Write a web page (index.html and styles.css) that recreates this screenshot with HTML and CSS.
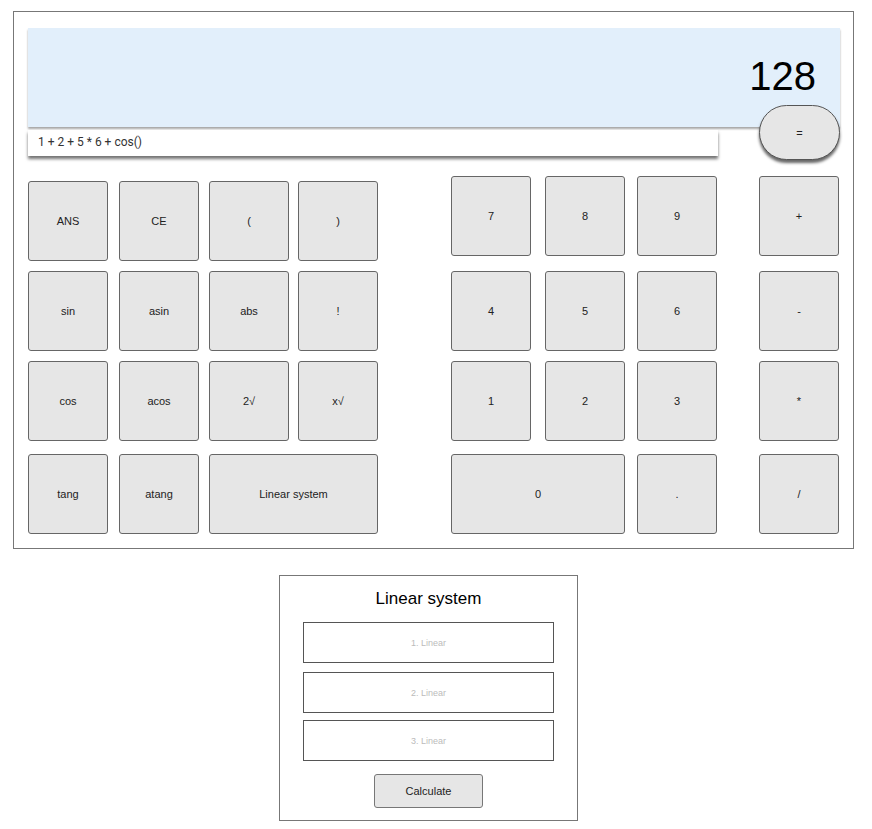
FILE: index.html
```html
<!DOCTYPE html>
<html>
<head>
<meta charset="utf-8">
<link rel="stylesheet" href="styles.css">
</head>
<body>
<div class="calc">
  <div class="screen">
    <div class="display">128</div>
    <div class="expr">1 + 2 + 5 * 6 + cos()</div>
    <button class="equals">=</button>
  </div>
  <div class="keys">
    <div class="left">
      <button class="key">ANS</button>
      <button class="key">CE</button>
      <button class="key">(</button>
      <button class="key">)</button>
      <button class="key">sin</button>
      <button class="key">asin</button>
      <button class="key">abs</button>
      <button class="key">!</button>
      <button class="key">cos</button>
      <button class="key">acos</button>
      <button class="key">2√</button>
      <button class="key">x√</button>
      <button class="key">tang</button>
      <button class="key">atang</button>
      <button class="key wide">Linear system</button>
    </div>
    <div class="right">
      <button class="key">7</button>
      <button class="key">8</button>
      <button class="key">9</button>
      <button class="key">+</button>
      <button class="key">4</button>
      <button class="key">5</button>
      <button class="key">6</button>
      <button class="key">-</button>
      <button class="key">1</button>
      <button class="key">2</button>
      <button class="key">3</button>
      <button class="key">*</button>
      <button class="key zero">0</button>
      <button class="key">.</button>
      <button class="key">/</button>
    </div>
  </div>
</div>
<div class="panel">
  <h2 class="panel-title">Linear system</h2>
  <input class="lin" placeholder="1. Linear">
  <input class="lin second" placeholder="2. Linear">
  <input class="lin third" placeholder="3. Linear">
  <button class="calc-btn">Calculate</button>
</div>
</body>
</html>
```

FILE: styles.css
```css
* { box-sizing: border-box; }
body {
  margin: 0;
  font-family: "Liberation Sans", Arial, sans-serif;
  background: #fff;
}
.calc {
  margin: 11px 0 0 13px;
  width: 841px;
  height: 538px;
  border: 1px solid #777;
  padding: 16px 13px 0 14px;
}
.screen {
  position: relative;
}
.display {
  height: 99px;
  width: 812px;
  background: #e2effb;
  box-shadow: 0 2px 2px rgba(0,0,0,0.35);
  font-size: 40px;
  text-align: right;
  padding: 26px 24px 0 0;
  color: #000;
}
.expr {
  margin-top: 3px;
  width: 690px;
  height: 26px;
  background: #fff;
  box-shadow: 0 3px 3px rgba(0,0,0,0.55);
  font-family: Roboto, "Liberation Sans", sans-serif;
  font-size: 12px;
  color: #333;
  padding: 5px 0 0 10px;
}
.equals {
  position: absolute;
  left: 731px;
  top: 77px;
  width: 81px;
  height: 55px;
  border-radius: 28px;
  border: 1px solid #555;
  background: #e6e6e6;
  box-shadow: 0 3px 3px rgba(0,0,0,0.6);
  font-family: "Liberation Sans", Arial, sans-serif;
  font-size: 11px;
  color: #222;
  padding: 0;
}
.keys {
  display: flex;
  margin-top: 20px;
}
.key {
  width: 80px;
  height: 80px;
  background: #e6e6e6;
  border: 1px solid #666;
  border-radius: 3px;
  font-family: "Liberation Sans", Arial, sans-serif;
  font-size: 11px;
  color: #222;
  padding: 0;
}
.left {
  display: grid;
  grid-template-columns: 91px 90px 89px 80px;
  grid-template-rows: 90px 90px 93px 80px;
  margin-top: 5px;
}
.left .wide { grid-column: span 2; width: 169px; }
.right {
  display: grid;
  grid-template-columns: 94px 92px 122px 80px;
  grid-template-rows: 95px 90px 93px 80px;
  margin-left: 73px;
}
.right .zero { grid-column: span 2; width: 174px; }
.panel {
  margin: 26px 0 0 279px;
  width: 299px;
  height: 246px;
  border: 1px solid #777;
  padding: 0 23px;
  display: flex;
  flex-direction: column;
  align-items: center;
}
.panel-title {
  margin: 13px 0 0;
  font-weight: normal;
  font-size: 17px;
  color: #000;
  height: 33px;
}
.lin {
  width: 251px;
  height: 41px;
  border: 1px solid #555;
  text-align: center;
  font-family: "Liberation Sans", Arial, sans-serif;
  font-size: 9px;
  padding: 0;
  outline: none;
}
.lin::placeholder { color: #bbb; }
.second { margin-top: 9px; }
.third { margin-top: 7px; }
.calc-btn {
  margin-top: 13px;
  width: 109px;
  height: 34px;
  background: #e6e6e6;
  border: 1px solid #777;
  border-radius: 3px;
  font-family: "Liberation Sans", Arial, sans-serif;
  font-size: 11px;
  color: #222;
}
```
